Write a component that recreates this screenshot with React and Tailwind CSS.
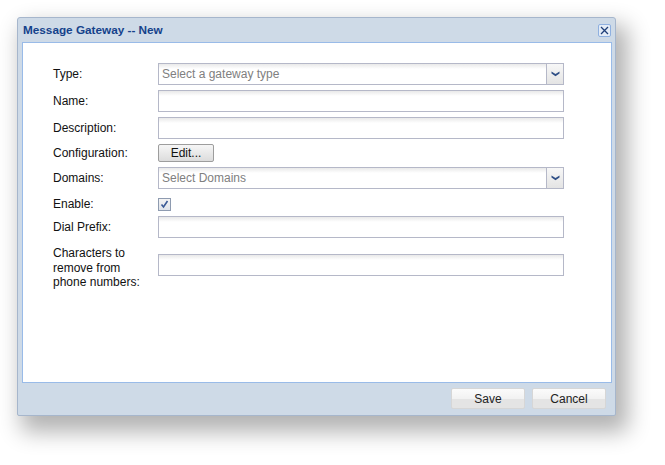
import React from 'react';

const font = { fontFamily: '"Liberation Sans", Arial, sans-serif' };

const inputCls =
  'h-[22px] w-[406px] border border-[#b5b8c8] bg-[linear-gradient(to_bottom,#e9e9e9,#ffffff_5px)]';

const Chevron = () => (
  <svg width="9" height="6" viewBox="0 0 9 6">
    <path d="M0.5 0.5 L4.5 3 L8.5 0.5 L8.5 2.5 L4.5 5.2 L0.5 2.5 Z" fill="#2f4f86" />
  </svg>
);

const Combo = ({ placeholder }) => (
  <div className={`${inputCls} flex items-stretch`}>
    <div className="flex-1 pl-[3px] text-[12px] leading-[20px] text-[#808080]">{placeholder}</div>
    <div className="w-[17px] border-l border-[#b5b8c8] bg-[linear-gradient(to_bottom,#f7f7f7,#e4e4e4)] flex items-center justify-center">
      <Chevron />
    </div>
  </div>
);

const Row = ({ label, children, className = '' }) => (
  <div className={`flex items-center ${className}`}>
    <div className="w-[105px] text-[12px] leading-[14.5px] text-[#111]">{label}</div>
    {children}
  </div>
);

const FooterButton = ({ children }) => (
  <button className="h-[21px] w-[74px] rounded-[2px] border border-[#d6d6d6] bg-[linear-gradient(to_bottom,#fbfbfb_0%,#f2f2f2_50%,#e4e4e4_50%,#e4e4e4_100%)] text-[12px] text-[#222]">
    {children}
  </button>
);

export default function App() {
  return (
    <div className="w-[665px] h-[465px] bg-white pt-[17px] pl-[17px]" style={font}>
      <div className="w-[599px] h-[399px] flex flex-col rounded-t-[3px] rounded-b-[2px] border border-[#a6b6cc] bg-[#cedae7] shadow-[8px_12px_22px_4px_rgba(0,0,0,0.3)]">
        {/* header */}
        <div className="h-[24px] flex items-center justify-between pl-[5px] pr-[4px]">
          <span className="text-[11.75px] font-bold text-[#15428b]">Message Gateway -- New</span>
          <div className="w-[13px] h-[13px] rounded-[2px] border border-[#8fb0e0] bg-[#e4ecf7] flex items-center justify-center">
            <svg width="9" height="9" viewBox="0 0 9 9">
              <path d="M1 1 L8 8 M8 1 L1 8" stroke="#1f3f78" strokeWidth="1.3" />
            </svg>
          </div>
        </div>

        {/* body */}
        <div className="h-[341px] ml-[4px] mr-[3px] border border-[#99bbe8] bg-white pl-[30px] pt-[20px]">
          <Row label="Type:">
            <Combo placeholder="Select a gateway type" />
          </Row>
          <Row label="Name:" className="mt-[5px]">
            <div className={inputCls} />
          </Row>
          <Row label="Description:" className="mt-[5px]">
            <div className={inputCls} />
          </Row>
          <Row label="Configuration:" className="mt-[3px] h-[22px]">
            <button className="h-[18px] w-[56px] rounded-[2px] border border-[#9d9d9d] bg-[linear-gradient(to_bottom,#f6f6f6,#dcdcdc)] text-[12px] leading-[16px] text-[#111]">
              Edit...
            </button>
          </Row>
          <Row label="Domains:" className="mt-[3px]">
            <Combo placeholder="Select Domains" />
          </Row>
          <Row label="Enable:" className="mt-[4px] h-[22px]">
            <div className="w-[13px] h-[13px] border border-[#8e9bb0] bg-[linear-gradient(to_bottom,#f4f4f4,#dfe3ea)] flex items-center justify-center">
              <svg width="9" height="9" viewBox="0 0 9 9">
                <path d="M1.5 4.5 L3.5 7 L7.5 1" stroke="#3a5a96" strokeWidth="1.6" fill="none" />
              </svg>
            </div>
          </Row>
          <Row label="Dial Prefix:" className="mt-[1px]">
            <div className={inputCls} />
          </Row>
          <div className="flex items-start mt-[8px]">
            <div className="w-[105px] text-[12px] leading-[14.5px] text-[#111]">
              Characters to<br />remove from<br />phone numbers:
            </div>
            <div className={`${inputCls} mt-[8px]`} />
          </div>
        </div>

        {/* footer */}
        <div className="flex-1 flex justify-end gap-[7px] pt-[5px] pr-[9px]">
          <FooterButton>Save</FooterButton>
          <FooterButton>Cancel</FooterButton>
        </div>
      </div>
    </div>
  );
}
